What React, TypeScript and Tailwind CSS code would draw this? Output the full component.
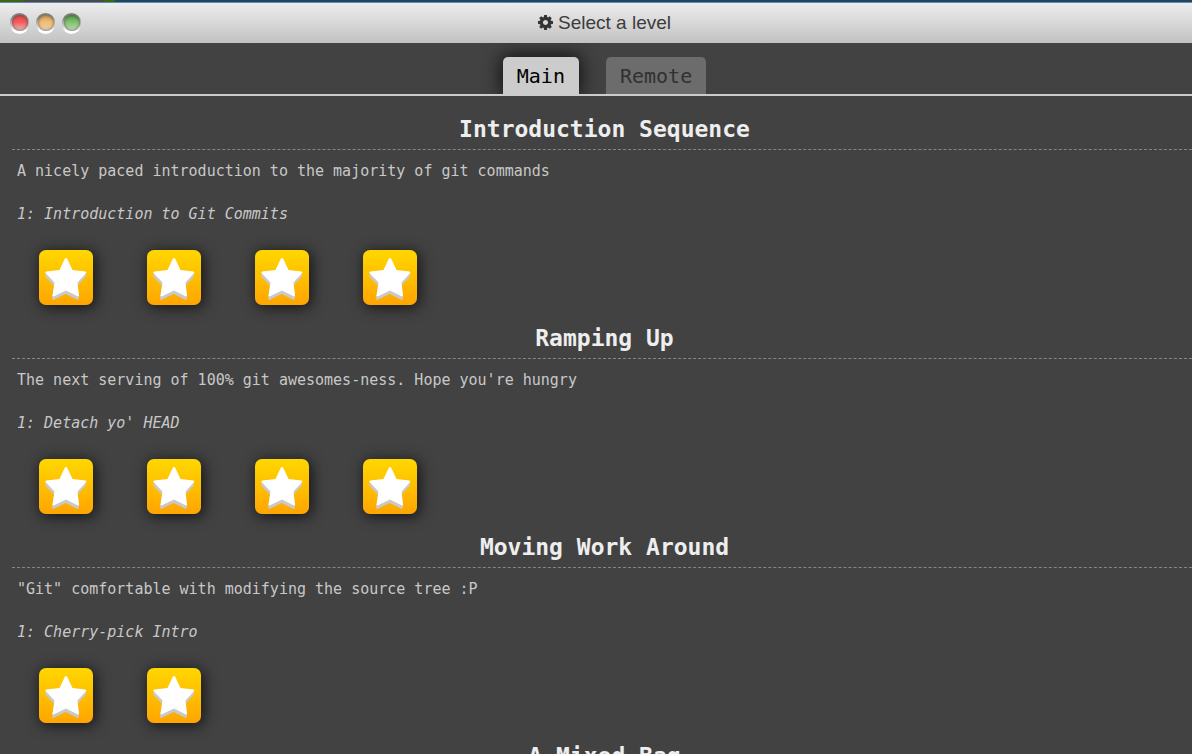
import React, { useState } from "react";

type Sequence = { title: string; about?: string; first?: string; levels: number };

const sequences: Sequence[] = [
  {
    title: "Introduction Sequence",
    about: "A nicely paced introduction to the majority of git commands",
    first: "1: Introduction to Git Commits",
    levels: 4,
  },
  {
    title: "Ramping Up",
    about: "The next serving of 100% git awesomes-ness. Hope you're hungry",
    first: "1: Detach yo' HEAD",
    levels: 4,
  },
  {
    title: "Moving Work Around",
    about: '"Git" comfortable with modifying the source tree :P',
    first: "1: Cherry-pick Intro",
    levels: 2,
  },
  { title: "A Mixed Bag", levels: 0 },
];

const lights = [
  { label: "Close", color: "bg-[linear-gradient(#d24646,#fb5a5a_45%,#dcc4c4)]" },
  { label: "Minimize", color: "bg-[linear-gradient(#c8985a,#f5be70_45%,#ddd0bc)]" },
  { label: "Zoom", color: "bg-[linear-gradient(#4f9440,#80c46c_45%,#c8d4c2)]" },
];

function Gear() {
  return (
    <svg viewBox="0 128 1536 1536" className="size-[15px] fill-[#333]" aria-hidden="true">
      <path d="M1024 896q0-106-75-181t-181-75-181 75-75 181 75 181 181 75 181-75 75-181zm512-109v222q0 12-8 23t-20 13l-185 28q-19 54-39 91 35 50 107 138 10 12 10 25t-9 23q-27 37-99 108t-94 71q-12 0-26-9l-138-108q-44 23-91 38-16 136-29 186-7 28-36 28h-222q-14 0-24.5-8.5t-11.5-21.5l-28-184q-49-16-90-37l-141 107q-10 9-25 9-14 0-25-11-126-114-165-168-7-10-7-23 0-12 8-23 15-21 51-66.5t54-70.5q-27-50-41-99l-183-27q-13-2-21-12.5t-8-23.5v-222q0-12 8-23t19-13l186-28q14-46 39-92-40-57-107-138-10-12-10-24 0-10 9-23 26-36 98.5-107.5t94.5-71.5q13 0 26 10l138 107q44-23 91-38 16-136 29-186 7-28 36-28h222q14 0 24.5 8.5t11.5 21.5l28 184q49 16 90 37l142-107q9-9 24-9 13 0 25 10 129 119 165 170 7 8 7 22 0 12-8 23-15 21-51 66.5t-54 70.5q26 50 41 98l183 28q13 2 21 12.5t8 23.5z" />
    </svg>
  );
}

const STAR =
  "M27 8q.8 0 1.300 1L33.500 20 46.500 21.500q1.300.500.500 1.700L38.500 32.500 40 45.500q0 1.500-1.500.800L27 40.500 15 46.300q-1.500.700-1.500-.8L15.500 32.500 6.700 23.300q-1-1.300.600-1.700L20.500 20 25.700 9q.500-1 1.300-1z";

function LevelButton({ label }: { label: string }) {
  return (
    <button
      aria-label={label}
      className="h-[55px] w-[54px] rounded-[7px] bg-linear-to-b from-[#ffd700] to-[#ffa500] shadow-[2px_2px_14px_1px_rgba(0,0,0,0.65)]"
    >
      <svg viewBox="0 0 54 55" className="h-[55px] w-[54px]" aria-hidden="true">
        <path d={STAR} fill="#c9c9c9" transform="translate(-0.3 3.500)" />
        <path d={STAR} fill="#c9c9c9" transform="translate(-0.2 1.800)" />
        <path d={STAR} fill="#fff" />
      </svg>
    </button>
  );
}

export default function App() {
  const [tab, setTab] = useState("Main");
  return (
    <div className="h-screen overflow-hidden bg-[#424242] font-['DejaVu_Sans_Mono',monospace] text-[15px] text-[#c8c8c8]">
      <div className="h-[3px] border-b border-[#5b8db8] bg-[linear-gradient(90deg,#3f6416_0_23px,#4a4a4a_23px_104px,#3f6416_104px_115px,#22465c_115px)]" />
      <div className="w-[calc(100%+17px)]">
        <header className="grid h-10 grid-cols-[1fr_auto_1fr] items-center bg-linear-to-b from-[#ededed] to-[#c2c2c2] px-[10px]">
          <div className="flex gap-[7px]">
            {lights.map((l) => (
              <button
                key={l.label}
                aria-label={l.label}
                className="flex h-[21px] w-[19px] items-center justify-center rounded-full bg-linear-to-b from-[#7c7c7c] from-20% to-white to-85%"
              >
                <span className={`size-4 rounded-full shadow-[inset_0_0_3px_rgba(60,60,60,0.8)] ${l.color}`} />
              </button>
            ))}
          </div>
          <h1 className="flex items-center gap-[5px] pb-[1px] font-['Liberation_Sans',sans-serif] text-[19px] leading-6 text-[#3c3c3c]">
            <Gear />
            Select a level
          </h1>
        </header>
        <nav className="flex items-end justify-center gap-[27px] border-b-2 border-[#ccc] pt-[14px] text-xl">
          {["Main", "Remote"].map((t) => (
            <button
              key={t}
              onClick={() => setTab(t)}
              className={
                t === tab
                  ? "h-[37px] rounded-t-[5px] bg-[#ccc] px-[14px] text-black shadow-[0_0_18px_2px_rgba(0,0,0,0.75)] [clip-path:inset(-14px_-30px_0_-30px)]"
                  : "h-[37px] rounded-t-[5px] bg-[#6c6c6c] px-[14px] text-[#303030]"
              }
            >
              {t}
            </button>
          ))}
        </nav>
        <main className="pt-[13px] pr-3 pl-3">
          {sequences.map((s) => (
            <section key={s.title} className="pb-[13px]">
              <h2 className="border-b border-dashed border-[#858585] text-center text-[23px] leading-10 font-bold text-[#eee]">
                {s.title}
              </h2>
              {s.about && <p className="mt-[11px] pl-[5px] leading-5">{s.about}</p>}
              {s.first && <p className="mt-[23px] pl-[5px] leading-5 italic">{s.first}</p>}
              {s.levels > 0 && (
                <div className="mt-[26px] flex gap-[54px] pl-[27px]">
                  {Array.from({ length: s.levels }, (_, i) => (
                    <LevelButton key={i} label={`${s.title}, level ${i + 1}`} />
                  ))}
                </div>
              )}
            </section>
          ))}
        </main>
      </div>
    </div>
  );
}
